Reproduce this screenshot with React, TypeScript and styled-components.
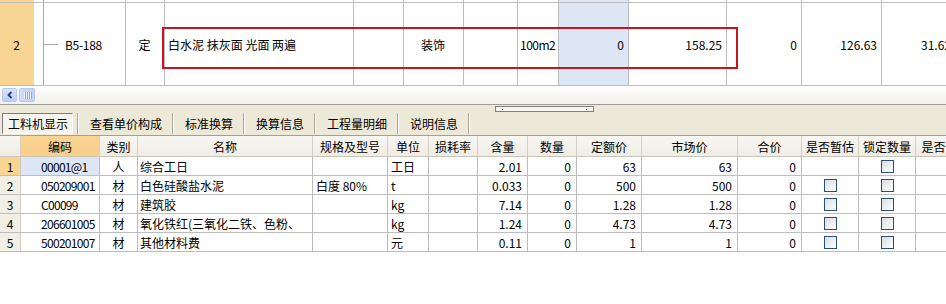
import React from 'react';
import styled, { createGlobalStyle, css } from 'styled-components';

const GlobalStyle = createGlobalStyle`
  html, body { margin: 0; padding: 0; background: #fff; }
  body {
    font-family: "SimSun", "Noto Sans CJK SC", sans-serif;
    font-size: 12px;
    color: #000;
  }
  * { box-sizing: border-box; }
`;

const LINE = '#bdbdbd';
const ORANGE = '#f9d594';
const SELBLUE = '#dde6f4';

const Page = styled.div`
  width: 946px;
  height: 304px;
  overflow: hidden;
  background: #fff;
  display: flex;
  flex-direction: column;
`;

/* ---------- top grid ---------- */
const TopGrid = styled.div`
  position: relative;
  flex: none;
`;

const TopRow = styled.div<{ $h: number }>`
  display: grid;
  grid-template-columns: 34px 92px 39px 189px 50px 60px 54px 41px 70px 98px 75px 80px 74px;
  height: ${(p) => p.$h}px;
  border-bottom: 1px solid ${LINE};
`;

type Align = 'left' | 'center' | 'right';

const justify = (a?: Align) =>
  a === 'center' ? 'center' : a === 'right' ? 'flex-end' : 'flex-start';

const TopCell = styled.div<{ $align?: Align; $bg?: string; $noLine?: boolean; $tight?: boolean; $pl?: number }>`
  display: flex;
  align-items: center;
  justify-content: ${(p) => justify(p.$align)};
  padding: 0 4px 0 ${(p) => (p.$pl ?? 3)}px;
  border-right: ${(p) => (p.$noLine ? 'none' : `1px solid ${LINE}`)};
  background: ${(p) => p.$bg || 'transparent'};
  letter-spacing: ${(p) => (p.$tight ? '-0.5px' : 'normal')};
  white-space: nowrap;
  overflow: hidden;
`;

const CodeCell = styled.div`
  display: flex;
  align-items: stretch;
  padding-left: 9px;
  border-right: 1px solid ${LINE};
  overflow: hidden;
  white-space: nowrap;
`;

const TreeGuide = styled.div<{ $branch?: boolean }>`
  width: 15px;
  flex: none;
  border-left: 1px solid #a8a8a8;
  display: flex;
  align-items: center;
  ${(p) =>
    p.$branch &&
    css`
      &::after {
        content: '';
        display: block;
        width: 15px;
        height: 1px;
        background: #a8a8a8;
      }
    `}
`;

const CodeText = styled.span`
  align-self: center;
  margin-left: 7px;
  letter-spacing: -0.3px;
`;

const Highlight = styled.div`
  position: absolute;
  left: 162px;
  top: 27px;
  width: 576px;
  height: 42px;
  border: 2px solid #c8141c;
  pointer-events: none;
`;

/* ---------- scrollbar ---------- */
const ScrollBar = styled.div`
  flex: none;
  height: 19px;
  display: flex;
  align-items: center;
  gap: 2px;
  padding-left: 2px;
  background: linear-gradient(#fefefd, #f2f1ea);
  border-bottom: 1px solid #9d9d9d;
`;

const ScrollButton = styled.div`
  width: 15px;
  height: 14px;
  border-radius: 2px;
  border: 1px solid #b7c8f2;
  background: linear-gradient(#dbe6fd, #b9cdf7);
  display: flex;
  align-items: center;
  justify-content: center;
`;

const ScrollThumb = styled(ScrollButton)`
  width: 16px;
  background: linear-gradient(90deg, #cddcfb, #c2d3fa);
  gap: 1px;
`;

const Grip = styled.span`
  width: 1px;
  height: 7px;
  background: #eef3fe;
  box-shadow: 1px 0 0 #8ca6df;
`;

/* ---------- splitter ---------- */
const Splitter = styled.div`
  flex: none;
  height: 7px;
  background: #ece9d8;
  display: flex;
  align-items: flex-start;
  padding-left: 495px;
  padding-top: 1px;
`;

const SplitHandle = styled.div`
  width: 99px;
  height: 6px;
  border: 1px solid #7f7f7f;
  background: #f6f5f0;
  display: flex;
  align-items: center;
  justify-content: space-between;
  padding: 0 6px;
`;

const Dot = styled.span`
  width: 1px;
  height: 1px;
  background: #222;
`;

/* ---------- tabs ---------- */
const TabBar = styled.div`
  flex: none;
  height: 24px;
  display: flex;
  align-items: stretch;
  padding: 1px 0 1px 2px;
  background: #ece9d8;
  border-bottom: 1px solid #a3a092;
`;

const Tab = styled.div<{ $active?: boolean }>`
  display: flex;
  align-items: center;
  padding: ${(p) => (p.$active ? '0 4px 0 0' : '0 10px 0 11px')};
  border-right: 1px solid #aca899;
  box-shadow: 1px 0 0 #fff;
  margin-right: 1px;
  white-space: nowrap;
`;

const TabLabel = styled.div`
  height: 100%;
  display: flex;
  align-items: center;
  padding: 0 4px 0 5px;
  border: 1px solid;
  border-color: #7b7b7b #ffffff #ffffff #7b7b7b;
  background: #f5f4ee;
`;

/* ---------- lower grid ---------- */
const LOWER_COLS = '21px 79px 38px 175px 75px 41px 49px 50px 49px 65px 96px 64px 57px 57px 60px';

const LowerGrid = styled.div`
  flex: none;
`;

const HeadRow = styled.div`
  display: grid;
  grid-template-columns: ${LOWER_COLS};
  height: 21px;
  border-bottom: 1px solid #c9c6b8;
  background: linear-gradient(#f8f7f2, #efede4);
`;

const HeadCell = styled.div<{ $hot?: boolean }>`
  display: flex;
  align-items: center;
  justify-content: center;
  border-right: 1px solid #d4d1c4;
  white-space: nowrap;
  overflow: hidden;
  ${(p) =>
    p.$hot &&
    css`
      background: linear-gradient(#fad392, #f8d08a);
    `}
`;

const BodyRow = styled.div`
  display: grid;
  grid-template-columns: ${LOWER_COLS};
  height: 19px;
  border-bottom: 1px solid ${LINE};
`;

const BodyCell = styled.div<{ $align?: Align; $bg?: string; $pl?: number; $pr?: number; $tight?: boolean }>`
  display: flex;
  align-items: center;
  justify-content: ${(p) => justify(p.$align)};
  padding: 0 ${(p) => (p.$pr ?? 5)}px 0 ${(p) => (p.$pl ?? 3)}px;
  border-right: 1px solid ${LINE};
  background: ${(p) => p.$bg || 'transparent'};
  letter-spacing: ${(p) => (p.$tight ? '-0.7px' : 'normal')};
  white-space: nowrap;
  overflow: hidden;
`;

const NumCell = styled(BodyCell)<{ $current?: boolean }>`
  justify-content: center;
  padding: 0;
  background: ${(p) => (p.$current ? ORANGE : '#f1efe6')};
  border-right-color: #cfccbf;
`;

const CheckBox = styled.span`
  width: 13px;
  height: 13px;
  border: 1px solid #2b4e74;
  background: linear-gradient(135deg, #d9dcdf 0%, #eef0f1 55%, #ffffff 100%);
`;

type Item = {
  code: string;
  kind: string;
  name: string;
  spec: string;
  unit: string;
  qty: string;
  defPrice: string;
  mktPrice: string;
  estimate: boolean;
};

const items: Item[] = [
  { code: '00001@1', kind: '人', name: '综合工日', spec: '', unit: '工日', qty: '2.01', defPrice: '63', mktPrice: '63', estimate: false },
  { code: '050209001', kind: '材', name: '白色硅酸盐水泥', spec: '白度 80%', unit: 't', qty: '0.033', defPrice: '500', mktPrice: '500', estimate: true },
  { code: 'C00099', kind: '材', name: '建筑胶', spec: '', unit: 'kg', qty: '7.14', defPrice: '1.28', mktPrice: '1.28', estimate: true },
  { code: '206601005', kind: '材', name: '氧化铁红(三氧化二铁、色粉、', spec: '', unit: 'kg', qty: '1.24', defPrice: '4.73', mktPrice: '4.73', estimate: true },
  { code: '500201007', kind: '材', name: '其他材料费', spec: '', unit: '元', qty: '0.11', defPrice: '1', mktPrice: '1', estimate: true },
];

const headers = ['', '编码', '类别', '名称', '规格及型号', '单位', '损耗率', '含量', '数量', '定额价', '市场价', '合价', '是否暂估', '锁定数量', '是否计价'];

const tabs = ['工料机显示', '查看单价构成', '标准换算', '换算信息', '工程量明细', '说明信息'];

const ChevronLeft = () => (
  <svg width="8" height="8" viewBox="0 0 8 8">
    <path d="M5.5 1 L2.5 4 L5.5 7" fill="none" stroke="#2d3f73" strokeWidth="1.8" />
  </svg>
);

export default function App() {
  return (
    <>
      <GlobalStyle />
      <Page>
        <TopGrid>
          <TopRow $h={3}>
            <TopCell $bg={ORANGE} $noLine />
            <CodeCell>
              <TreeGuide />
            </CodeCell>
            {Array.from({ length: 11 }).map((_, i) => (
              <TopCell key={i} $bg={i === 6 ? SELBLUE : undefined} />
            ))}
          </TopRow>
          <TopRow $h={83}>
            <TopCell $bg={ORANGE} $align="center" $noLine>2</TopCell>
            <CodeCell>
              <TreeGuide $branch />
              <CodeText>B5-188</CodeText>
            </CodeCell>
            <TopCell $align="center">定</TopCell>
            <TopCell>白水泥 抹灰面 光面 两遍</TopCell>
            <TopCell />
            <TopCell $align="center">装饰</TopCell>
            <TopCell />
            <TopCell $pl={2} $tight>100m2</TopCell>
            <TopCell $align="right" $bg={SELBLUE}>0</TopCell>
            <TopCell $align="right">158.25</TopCell>
            <TopCell $align="right">0</TopCell>
            <TopCell $align="right">126.63</TopCell>
            <TopCell $align="right">31.62</TopCell>
          </TopRow>
          <Highlight />
        </TopGrid>

        <ScrollBar>
          <ScrollButton>
            <ChevronLeft />
          </ScrollButton>
          <ScrollThumb>
            <Grip />
            <Grip />
            <Grip />
            <Grip />
          </ScrollThumb>
        </ScrollBar>

        <Splitter>
          <SplitHandle>
            <Dot />
            <Dot />
          </SplitHandle>
        </Splitter>

        <TabBar>
          {tabs.map((t, i) =>
            i === 0 ? (
              <Tab key={t} $active>
                <TabLabel>{t}</TabLabel>
              </Tab>
            ) : (
              <Tab key={t}>{t}</Tab>
            )
          )}
        </TabBar>

        <LowerGrid>
          <HeadRow>
            {headers.map((h, i) => (
              <HeadCell key={i} $hot={i === 1}>
                {h}
              </HeadCell>
            ))}
          </HeadRow>
          {items.map((it, i) => (
            <BodyRow key={it.code}>
              <NumCell $current={i === 0}>{i + 1}</NumCell>
              <BodyCell $pl={20} $pr={0} $tight $bg={i === 0 ? SELBLUE : undefined}>{it.code}</BodyCell>
              <BodyCell $align="center" $pl={0} $pr={0}>{it.kind}</BodyCell>
              <BodyCell $pl={2}>{it.name}</BodyCell>
              <BodyCell>{it.spec}</BodyCell>
              <BodyCell>{it.unit}</BodyCell>
              <BodyCell />
              <BodyCell $align="right">{it.qty}</BodyCell>
              <BodyCell $align="right">0</BodyCell>
              <BodyCell $align="right">{it.defPrice}</BodyCell>
              <BodyCell $align="right">{it.mktPrice}</BodyCell>
              <BodyCell $align="right">0</BodyCell>
              <BodyCell $align="center" $pl={0} $pr={0}>
                {it.estimate && <CheckBox />}
              </BodyCell>
              <BodyCell $align="center" $pl={0} $pr={0}>
                <CheckBox />
              </BodyCell>
              <BodyCell />
            </BodyRow>
          ))}
        </LowerGrid>
      </Page>
    </>
  );
}
